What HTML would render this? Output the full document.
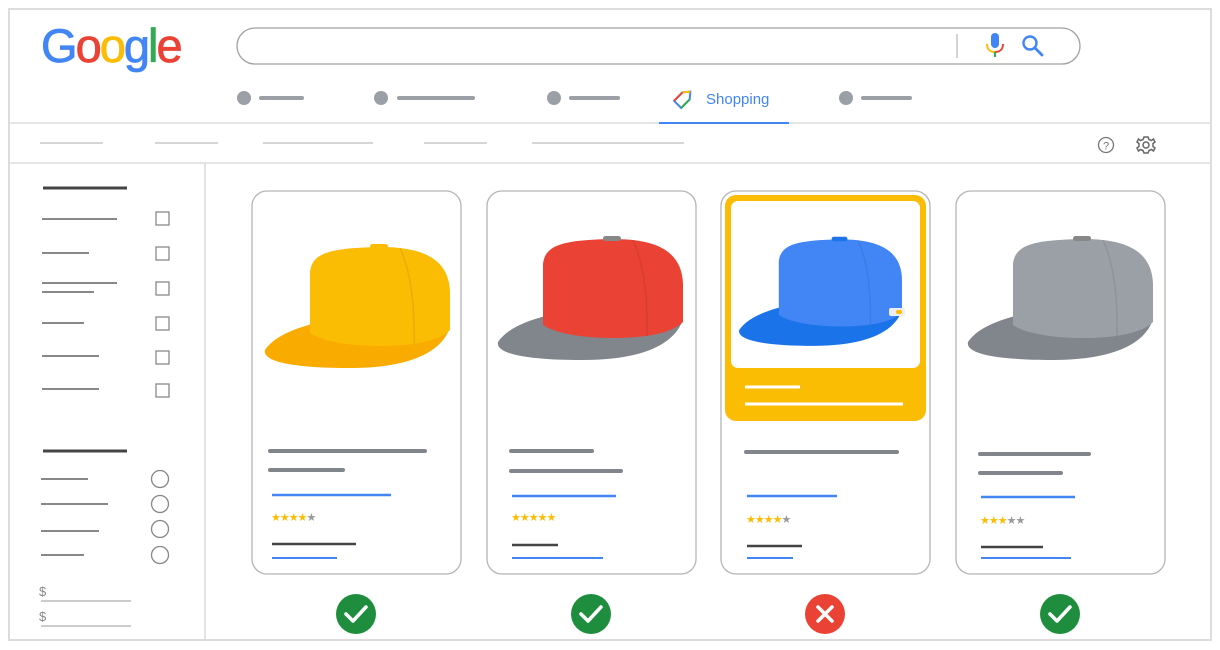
<!DOCTYPE html>
<html><head><meta charset="utf-8"><style>
html,body{margin:0;padding:0;background:#fff;width:1220px;height:650px;overflow:hidden}
svg{display:block}
text{font-family:"Liberation Sans",Arial,sans-serif}
</style></head><body>
<svg width="1220" height="650" viewBox="0 0 1220 650" xmlns="http://www.w3.org/2000/svg">
<rect x="9" y="9" width="1202" height="631" fill="#fff" stroke="#dcdcdc" stroke-width="2"/>
<!-- logo -->
<text x="41" y="62" font-size="47" letter-spacing="-2" stroke-width="0.8"><tspan fill="#4285F4" stroke="#4285F4">G</tspan><tspan fill="#EA4335" stroke="#EA4335">o</tspan><tspan fill="#FBBC05" stroke="#FBBC05">o</tspan><tspan fill="#4285F4" stroke="#4285F4">g</tspan><tspan fill="#34A853" stroke="#34A853">l</tspan><tspan fill="#EA4335" stroke="#EA4335">e</tspan></text>
<!-- search -->
<rect x="237" y="28" width="843" height="36" rx="18" fill="#fff" stroke="#a0a0a0" stroke-width="1.3"/>
<line x1="957" y1="34" x2="957" y2="58" stroke="#bbb" stroke-width="1.3"/>
<rect x="991" y="33" width="8" height="15" rx="4" fill="#4285F4"/>
<path d="M987,44 C987,50 991,52 995,52" fill="none" stroke="#FBBC05" stroke-width="2"/>
<path d="M995,52 C999,52 1003,50 1003,44" fill="none" stroke="#EA4335" stroke-width="2"/>
<line x1="995" y1="52" x2="995" y2="57" stroke="#34A853" stroke-width="2"/>
<circle cx="1030" cy="43" r="6.5" fill="none" stroke="#4285F4" stroke-width="2.4"/>
<line x1="1035" y1="48" x2="1042" y2="55" stroke="#4285F4" stroke-width="2.8" stroke-linecap="round"/>
<!-- nav -->
<g fill="#9aa0a6"><circle cx="244" cy="98" r="7"/><circle cx="381" cy="98" r="7"/><circle cx="554" cy="98" r="7"/><circle cx="846" cy="98" r="7"/></g>
<g stroke="#9aa0a6" stroke-width="4" stroke-linecap="round"><line x1="261" y1="98" x2="302" y2="98"/><line x1="399" y1="98" x2="473" y2="98"/><line x1="571" y1="98" x2="618" y2="98"/><line x1="863" y1="98" x2="910" y2="98"/></g>
<g transform="translate(684,98) rotate(-45)" fill="none" stroke-width="2">
<path d="M-9,-5 L3,-5 L9,0 L3,5 L-9,5 Z" stroke="#4285F4"/>
<path d="M-9,-5 L3,-5" stroke="#EA4335"/><path d="M3,-5 L9,0" stroke="#FBBC05"/><path d="M-9,5 L3,5" stroke="#34A853"/>
</g>
<text x="706" y="104" font-size="15" fill="#4285F4">Shopping</text>
<line x1="659" y1="123" x2="789" y2="123" stroke="#4285F4" stroke-width="2"/>
<line x1="10" y1="123" x2="659" y2="123" stroke="#d5d5d5" stroke-width="1.3"/>
<line x1="789" y1="123" x2="1210" y2="123" stroke="#d5d5d5" stroke-width="1.3"/>
<!-- row 2 -->
<g stroke="#c8c8c8" stroke-width="1.5"><line x1="40" y1="143" x2="103" y2="143"/><line x1="155" y1="143" x2="218" y2="143"/><line x1="263" y1="143" x2="373" y2="143"/><line x1="424" y1="143" x2="487" y2="143"/><line x1="532" y1="143" x2="684" y2="143"/></g>
<circle cx="1106" cy="145" r="7.5" fill="none" stroke="#777" stroke-width="1.3"/>
<text x="1106" y="149.5" font-size="11" fill="#777" text-anchor="middle">?</text>
<g transform="translate(1146,145)" fill="none" stroke="#666" stroke-width="1.5">
<path d="M-2,-8 L2,-8 L3,-5.5 L5.5,-4.5 L7.5,-6 L9,-3 L7,-1.5 L7,1.5 L9,3 L7.5,6 L5.5,4.5 L3,5.5 L2,8 L-2,8 L-3,5.5 L-5.5,4.5 L-7.5,6 L-9,3 L-7,1.5 L-7,-1.5 L-9,-3 L-7.5,-6 L-5.5,-4.5 L-3,-5.5 Z"/>
<circle r="3"/></g>
<line x1="10" y1="163" x2="1210" y2="163" stroke="#d5d5d5" stroke-width="1.3"/>
<line x1="205" y1="163" x2="205" y2="640" stroke="#d5d5d5" stroke-width="1.3"/>
<!-- sidebar -->
<g stroke="#444" stroke-width="3"><line x1="43" y1="188" x2="127" y2="188"/><line x1="43" y1="451" x2="127" y2="451"/></g>
<g stroke="#888" stroke-width="2">
<line x1="42" y1="219" x2="117" y2="219"/><line x1="42" y1="253" x2="89" y2="253"/><line x1="42" y1="283" x2="117" y2="283"/><line x1="42" y1="292" x2="94" y2="292"/><line x1="42" y1="323" x2="84" y2="323"/><line x1="42" y1="356" x2="99" y2="356"/><line x1="42" y1="389" x2="99" y2="389"/>
<line x1="41" y1="479" x2="88" y2="479"/><line x1="41" y1="504" x2="108" y2="504"/><line x1="41" y1="531" x2="99" y2="531"/><line x1="41" y1="555" x2="84" y2="555"/>
</g>
<g fill="none" stroke="#888" stroke-width="1.3">
<rect x="156" y="212" width="13" height="13"/><rect x="156" y="247" width="13" height="13"/><rect x="156" y="282" width="13" height="13"/><rect x="156" y="317" width="13" height="13"/><rect x="156" y="351" width="13" height="13"/><rect x="156" y="384" width="13" height="13"/>
<circle cx="160" cy="479" r="8.5"/><circle cx="160" cy="504" r="8.5"/><circle cx="160" cy="529" r="8.5"/><circle cx="160" cy="555" r="8.5"/>
</g>
<text x="39" y="596" font-size="13" fill="#888">$</text><text x="39" y="621" font-size="13" fill="#888">$</text>
<g stroke="#999" stroke-width="1"><line x1="41" y1="601" x2="131" y2="601"/><line x1="41" y1="626" x2="131" y2="626"/></g>
<!-- cards -->
<g fill="#fff" stroke="#b5b5b5" stroke-width="1.3">
<rect x="252" y="191" width="209" height="383" rx="15"/><rect x="487" y="191" width="209" height="383" rx="15"/><rect x="721" y="191" width="209" height="383" rx="15"/><rect x="956" y="191" width="209" height="383" rx="15"/>
</g>
<rect x="725" y="195" width="201" height="226" rx="11" fill="#FBBC04"/>
<rect x="731" y="201" width="189" height="167" rx="7" fill="#fff"/>
<g stroke="#fff" stroke-width="3"><line x1="745" y1="387" x2="800" y2="387"/><line x1="745" y1="404" x2="903" y2="404"/></g>
<!-- hats -->
<g>
<path d="M265,350 C275,335 298,328 312,324 C340,340 400,346 449,330 C440,352 410,368 350,368 C295,368 262,362 265,350 Z" fill="#F9AB00"/>
<path d="M310,333 L310,272 C312,252 332,248 380,247 C428,247 449,262 450,292 L450,330 C438,342 410,346 380,346 C345,346 320,340 310,333 Z" fill="#FBBC04"/>
<path d="M400,248 C410,270 415,300 414,344" fill="none" stroke="rgba(0,0,0,0.08)" stroke-width="1.5"/>
<rect x="370" y="244" width="18" height="5" rx="2.5" fill="#FBBC04"/>
</g>
<g transform="translate(233,-8)">
<path d="M265,350 C275,335 298,328 312,324 C340,340 400,346 449,330 C440,352 410,368 350,368 C295,368 262,362 265,350 Z" fill="#80868B"/>
<path d="M310,333 L310,272 C312,252 332,248 380,247 C428,247 449,262 450,292 L450,330 C438,342 410,346 380,346 C345,346 320,340 310,333 Z" fill="#EA4335"/>
<path d="M400,248 C410,270 415,300 414,344" fill="none" stroke="rgba(0,0,0,0.08)" stroke-width="1.5"/>
<rect x="370" y="244" width="18" height="5" rx="2.5" fill="#888"/>
</g>
<g transform="translate(506,22) scale(0.88)">
<path d="M265,350 C275,335 298,328 312,324 C340,340 400,346 449,330 C440,352 410,368 350,368 C295,368 262,362 265,350 Z" fill="#1A73E8"/>
<path d="M310,333 L310,272 C312,252 332,248 380,247 C428,247 449,262 450,292 L450,330 C438,342 410,346 380,346 C345,346 320,340 310,333 Z" fill="#4285F4"/>
<path d="M400,248 C410,270 415,300 414,344" fill="none" stroke="rgba(0,0,0,0.08)" stroke-width="1.5"/>
<rect x="370" y="244" width="18" height="5" rx="2.5" fill="#1A73E8"/>
</g>
<rect x="889" y="308" width="16" height="8" rx="2" fill="#eee"/><rect x="896" y="310" width="6" height="4" rx="2" fill="#FBBC04"/>
<g transform="translate(703,-8)">
<path d="M265,350 C275,335 298,328 312,324 C340,340 400,346 449,330 C440,352 410,368 350,368 C295,368 262,362 265,350 Z" fill="#80868B"/>
<path d="M310,333 L310,272 C312,252 332,248 380,247 C428,247 449,262 450,292 L450,330 C438,342 410,346 380,346 C345,346 320,340 310,333 Z" fill="#9AA0A6"/>
<path d="M400,248 C410,270 415,300 414,344" fill="none" stroke="rgba(0,0,0,0.08)" stroke-width="1.5"/>
<rect x="370" y="244" width="18" height="5" rx="2.5" fill="#888"/>
</g>
<!-- card text -->
<g stroke="#80868B" stroke-width="4" stroke-linecap="round">
<line x1="270" y1="451" x2="425" y2="451"/><line x1="270" y1="470" x2="343" y2="470"/>
<line x1="511" y1="451" x2="592" y2="451"/><line x1="511" y1="471" x2="621" y2="471"/>
<line x1="746" y1="452" x2="897" y2="452"/>
<line x1="980" y1="454" x2="1089" y2="454"/><line x1="980" y1="473" x2="1061" y2="473"/>
</g>
<g stroke="#4285F4" stroke-width="2.5">
<line x1="272" y1="495" x2="391" y2="495"/><line x1="512" y1="496" x2="616" y2="496"/><line x1="747" y1="496" x2="837" y2="496"/><line x1="981" y1="497" x2="1075" y2="497"/>
</g>
<g stroke="#4285F4" stroke-width="2">
<line x1="272" y1="558" x2="337" y2="558"/><line x1="512" y1="558" x2="603" y2="558"/><line x1="747" y1="558" x2="793" y2="558"/><line x1="981" y1="558" x2="1071" y2="558"/>
</g>
<g stroke="#444" stroke-width="2.5">
<line x1="272" y1="544" x2="356" y2="544"/><line x1="512" y1="545" x2="558" y2="545"/><line x1="747" y1="546" x2="802" y2="546"/><line x1="981" y1="547" x2="1043" y2="547"/>
</g>
<g font-size="11" style="letter-spacing:-1px">
<text x="271" y="521"><tspan fill="#FBBC04">★★★★</tspan><tspan fill="#999">★</tspan></text>
<text x="511" y="521"><tspan fill="#FBBC04">★★★★★</tspan></text>
<text x="746" y="523"><tspan fill="#FBBC04">★★★★</tspan><tspan fill="#999">★</tspan></text>
<text x="980" y="524"><tspan fill="#FBBC04">★★★</tspan><tspan fill="#999">★★</tspan></text>
</g>
<!-- status -->
<g fill="#1E8E3E"><circle cx="356" cy="614" r="20"/><circle cx="591" cy="614" r="20"/><circle cx="1060" cy="614" r="20"/></g>
<circle cx="825" cy="614" r="20" fill="#EA4335"/>
<g fill="none" stroke="#fff" stroke-width="3.5" stroke-linecap="round" stroke-linejoin="round">
<path d="M346,614 L353,621 L366,607"/><path d="M581,614 L588,621 L601,607"/><path d="M1050,614 L1057,621 L1070,607"/>
<path d="M818,607 L832,621 M832,607 L818,621"/>
</g>
</svg>
</body></html>
